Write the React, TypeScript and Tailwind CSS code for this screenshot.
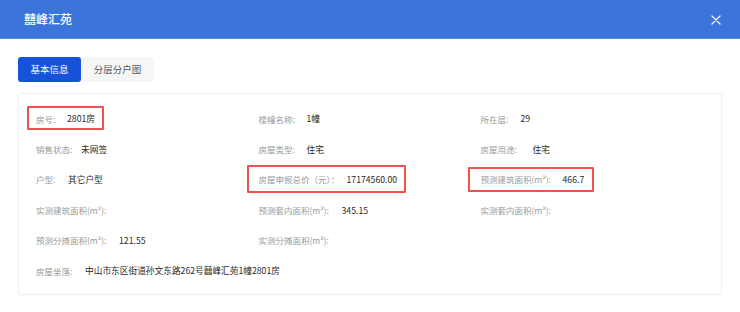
import React from "react";

type Item = {
  label: string;
  value?: string;
  lw: string;
  box?: string;
};

const rows: Item[][] = [
  [
    { label: "房号:", value: "2801房", lw: "w-[31px]", box: "left-[-9px] top-[-3px] w-[77px] h-[24px]" },
    { label: "楼幢名称:", value: "1幢", lw: "w-[48px]" },
    { label: "所在层:", value: "29", lw: "w-[40px]" },
  ],
  [
    { label: "销售状态:", value: "未网签", lw: "w-[45px]" },
    { label: "房屋类型:", value: "住宅", lw: "w-[48px]" },
    { label: "房屋用途:", value: "住宅", lw: "w-[52px]" },
  ],
  [
    { label: "户型:", value: "其它户型", lw: "w-[32px]" },
    { label: "房屋申报总价（元）：", value: "17174560.00", lw: "w-[88px]", box: "left-[-12px] top-[-5px] w-[159px] h-[28px]" },
    { label: "预测建筑面积(m²):", value: "466.7", lw: "w-[82px]", box: "left-[-13px] top-[-3px] w-[126px] h-[25px]" },
  ],
  [
    { label: "实测建筑面积(m²):", lw: "w-[82px]" },
    { label: "预测套内面积(m²):", value: "345.15", lw: "w-[83px]" },
    { label: "实测套内面积(m²):", lw: "w-[82px]" },
  ],
  [
    { label: "预测分摊面积(m²):", value: "121.55", lw: "w-[83px]" },
    { label: "实测分摊面积(m²):", lw: "w-[82px]" },
  ],
];

function Cell({ it }: { it: Item }) {
  return (
    <div className="relative flex h-[20px] items-center whitespace-nowrap">
      <span className={`${it.lw} shrink-0 text-[8.5px] text-[#9a9a9a]`}>{it.label}</span>
      {it.value && <span className="text-[8.7px] text-[#2a2a2a]">{it.value}</span>}
      {it.box && <div className={`absolute ${it.box} border-2 border-[#f05252] rounded-[1px]`} />}
    </div>
  );
}

export default function App() {
  return (
    <div
      className="w-[740px] h-[312px] bg-white overflow-hidden"
      style={{ fontFamily: '"Noto Sans CJK SC", "Noto Sans", sans-serif' }}
    >
      <div className="h-[39px] bg-[#3d74dc] flex items-center justify-between pl-[24px] pr-[19px] border-b border-[#5b8ae3]">
        <span className="text-[12px] font-medium text-white">囍峰汇苑</span>
        <svg width="10" height="10" viewBox="0 0 10 10" className="mt-[1px]">
          <path d="M1 1L9 9M9 1L1 9" stroke="#ffffff" strokeWidth="1.4" strokeLinecap="round" opacity="0.9" />
        </svg>
      </div>
      <div className="px-[18px] pt-[18px]">
        <div className="flex">
          <div className="w-[63px] h-[25px] rounded-[3px] bg-[#1653d8] text-white text-[9.5px] flex items-center justify-center">
            基本信息
          </div>
          <div className="w-[73px] h-[25px] rounded-r-[3px] bg-[#f5f6f8] text-[#555555] text-[9.5px] flex items-center justify-center">
            分层分户图
          </div>
        </div>
        <div className="mt-[11px] w-[704px] h-[202px] border border-[#eef0f3] rounded-[3px] shadow-[0_0_2px_rgba(0,0,0,0.04)] pl-[17px] pt-[15px]">
          <div className="flex flex-col gap-y-[10.4px]">
            {rows.map((r, i) => (
              <div key={i} className="grid grid-cols-[222.5px_222px_222px]">
                {r.map((it, j) => (
                  <Cell key={j} it={it} />
                ))}
              </div>
            ))}
            <div className="flex h-[20px] items-center whitespace-nowrap">
              <span className="w-[49px] shrink-0 text-[8.5px] text-[#9a9a9a]">房屋坐落:</span>
              <span className="text-[8.7px] text-[#2a2a2a]">中山市东区街道孙文东路262号囍峰汇苑1幢2801房</span>
            </div>
          </div>
        </div>
      </div>
    </div>
  );
}
